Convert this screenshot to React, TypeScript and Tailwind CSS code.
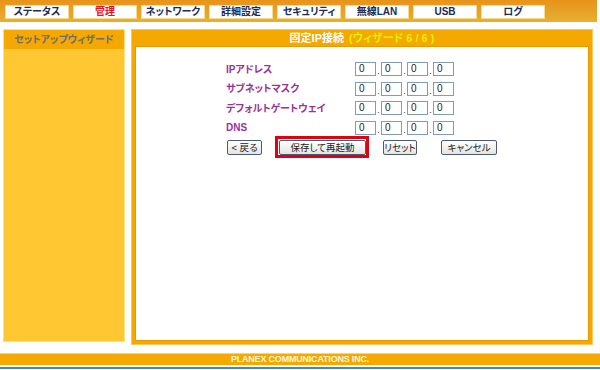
import React from "react";

const tabs = [
  { label: "ステータス" },
  { label: "管理", active: true },
  { label: "ネットワーク" },
  { label: "詳細設定" },
  { label: "セキュリティ" },
  { label: "無線LAN" },
  { label: "USB" },
  { label: "ログ" },
];

const fields = ["IPアドレス", "サブネットマスク", "デフォルトゲートウェイ", "DNS"];

const jp =
  "font-['Liberation_Sans','Noto_Sans_CJK_JP',sans-serif] [font-feature-settings:'palt']";

const Btn: React.FC<{ label: string; w: string }> = ({ label, w }) => (
  <button
    className={`${w} h-[15px] whitespace-nowrap rounded-[2px] border border-[#4a5a78] bg-gradient-to-b from-white to-[#e6e4dc] px-0 text-[9.5px] leading-[13px] text-[#222] ${jp}`}
  >
    {label}
  </button>
);

export default function App() {
  return (
    <div className={`relative w-[600px] h-[370px] overflow-hidden bg-white ${jp}`}>
      {/* top menu */}
      <div className="flex h-[22px] w-[597px] gap-[4px] bg-gradient-to-b from-[#e8931a] to-[#e6b030] pl-[5px] pt-[5px]">
        {tabs.map((t) => (
          <div
            key={t.label}
            className={`flex h-[14px] w-[64px] items-center justify-center border border-[#f6dc8c] bg-white text-[10px] font-bold leading-none ${
              t.active ? "text-[#e8101a]" : "text-[#1d2b58]"
            }`}
          >
            {t.label}
          </div>
        ))}
      </div>

      {/* body */}
      <div className="mt-[7px] flex gap-[6px] pl-[3px]">
        {/* sidebar */}
        <div className="flex h-[313px] w-[122px] flex-col border border-[#ffe08a] bg-[#ffc832]">
          <div className="flex h-[19px] items-center justify-center bg-[#f5a800] text-[10px] font-bold text-[#6e6e6e]">
            セットアップウィザード
          </div>
        </div>

        {/* main panel */}
        <div className="flex h-[316px] w-[462px] flex-col border border-[#f8c860] bg-[#f5a800] px-[3px] pb-[3px]">
          <div className="flex h-[16px] items-center justify-center gap-[5px] text-[11px] font-bold leading-none">
            <span className="text-white">固定IP接続</span>
            <span className="text-[#dcf000]">(ウィザード 6 / 6 )</span>
          </div>
          <div className="flex-1 border border-[#e69a00] bg-white pl-[90px] pt-[15px]">
            <div className="flex flex-col gap-[5.5px]">
              {fields.map((f) => (
                <div key={f} className="flex h-[14px] items-center">
                  <div className="w-[129px] text-[10px] font-bold text-[#993399]">{f}</div>
                  {[0, 1, 2, 3].map((i) => (
                    <React.Fragment key={i}>
                      {i > 0 && (
                        <span className="flex w-[5px] items-end justify-center self-end text-[9px] leading-[10px] text-[#333]">
                          .
                        </span>
                      )}
                      <div className="h-[14px] w-[21px] border border-[#7f9db9] bg-white pl-[3px] text-[10px] leading-[12px] text-[#222]">
                        0
                      </div>
                    </React.Fragment>
                  ))}
                </div>
              ))}
            </div>

            <div className="mt-[1.5px] flex h-[22px] items-center">
              <div className="ml-[1px] flex">
                <Btn label="< 戻る" w="w-[35px]" />
              </div>
              <div className="ml-[13px] flex h-[22px] w-[94px] items-center border-[3px] border-[#e00012] pl-[1px]">
                <Btn label="保存して再起動" w="w-[87px]" />
              </div>
              <div className="ml-[14px] flex">
                <Btn label="リセット" w="w-[34px]" />
              </div>
              <div className="ml-[24px] flex">
                <Btn label="キャンセル" w="w-[56px]" />
              </div>
            </div>
          </div>
        </div>
      </div>

      {/* footer */}
      <div className="mt-[8px] flex h-[12px] items-center justify-center border-t border-[#ffd27a] bg-[#f5a800] font-['Liberation_Sans',sans-serif] text-[9px] font-bold leading-none tracking-[-0.2px] text-[#fff6dc]">
        PLANEX COMMUNICATIONS INC.
      </div>
      <div className="mt-[2px] h-[2px] bg-[#4a80d8]" />
    </div>
  );
}
